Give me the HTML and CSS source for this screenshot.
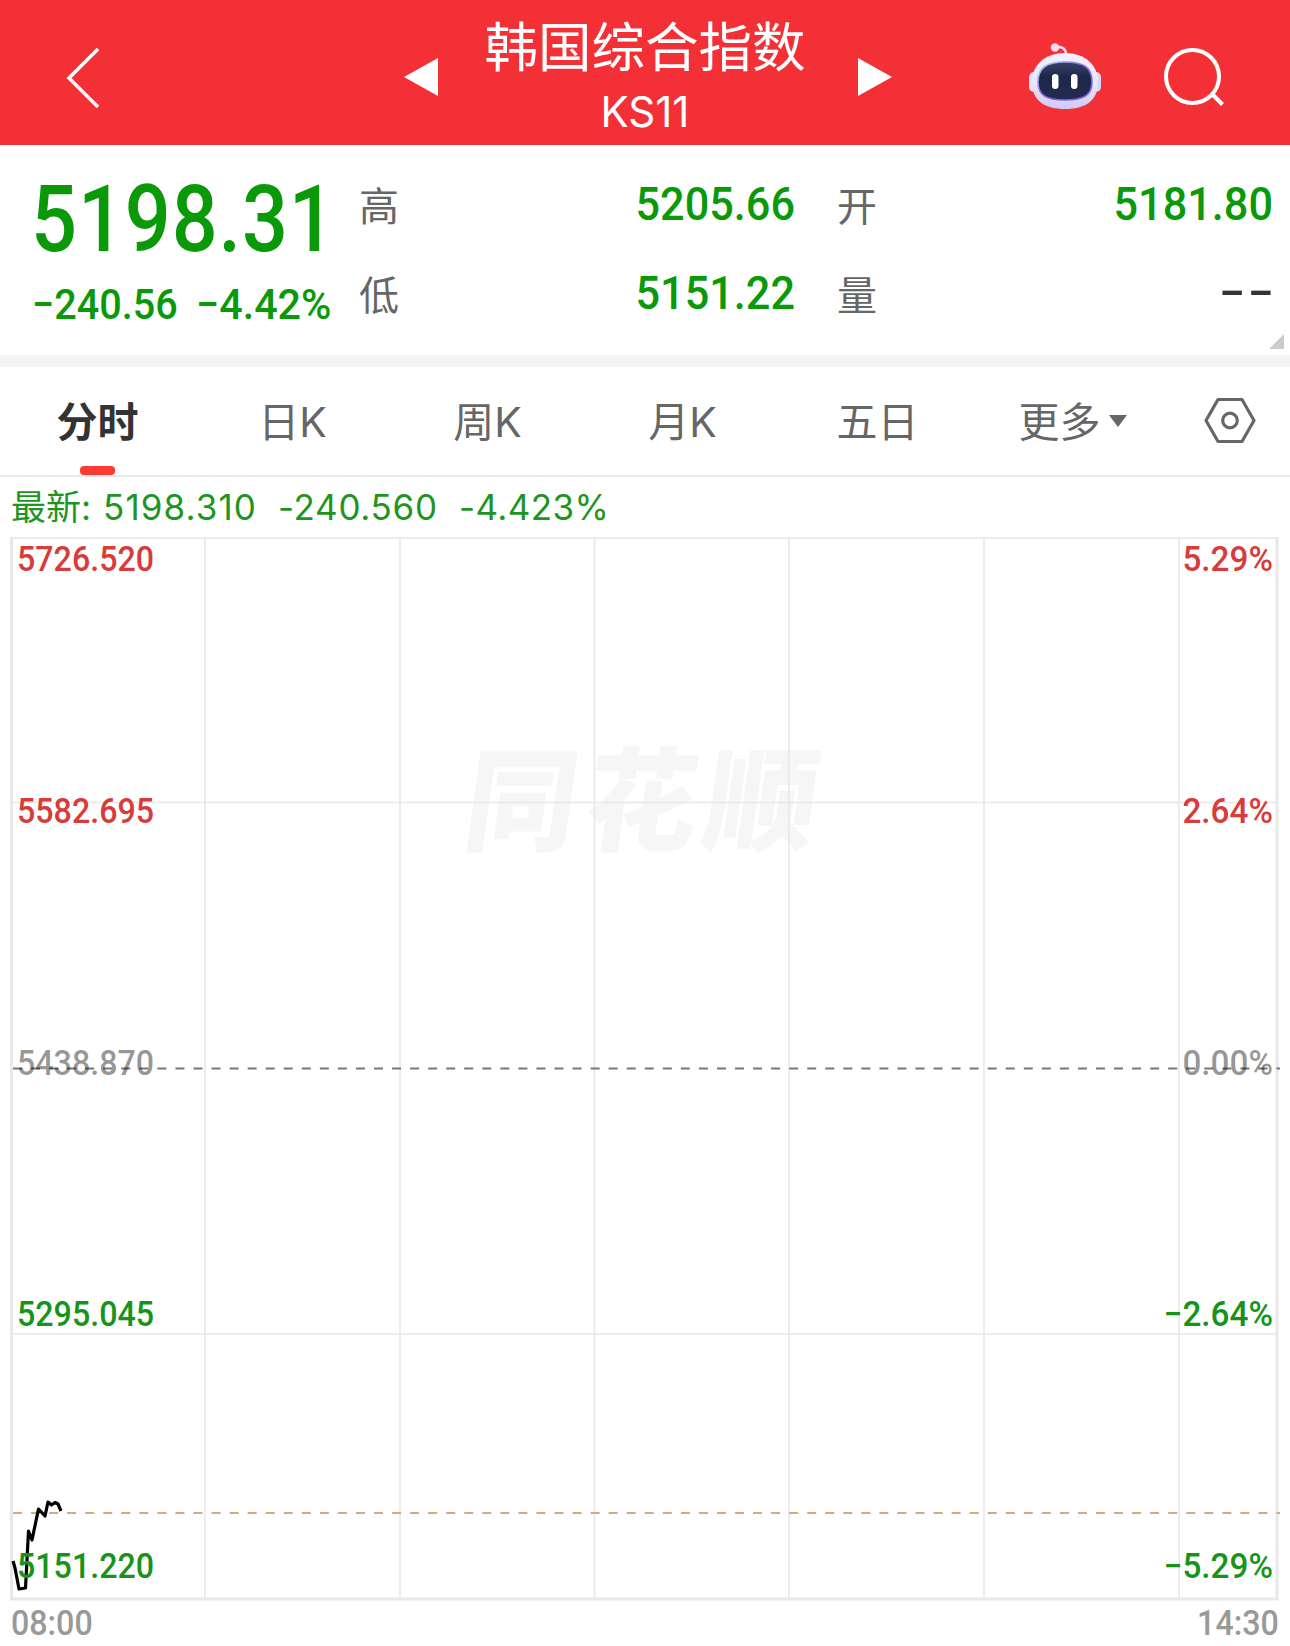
FILE: index.html
```html
<!DOCTYPE html>
<html lang="zh-CN">
<head>
    <meta charset="UTF-8">
    <meta name="viewport" content="width=device-width, initial-scale=1.0">
    <title>韩国综合指数 KS11</title>
    <link rel="stylesheet" href="styles.css">
</head>
<body>
    <header class="topbar">
        <svg class="back" width="40" height="64" viewBox="0 0 40 64" fill="none" stroke="#fff" stroke-width="3.5">
            <path d="M35 3 L6 32 L35 61"/>
        </svg>
        <div class="switcher">
            <svg width="34" height="38" viewBox="0 0 34 38" fill="#fff"><path d="M34 0 V38 L0 19 Z"/></svg>
            <div class="title">
                <h1>韩国综合指数</h1>
                <span>KS11</span>
            </div>
            <svg width="34" height="38" viewBox="0 0 34 38" fill="#fff"><path d="M0 0 V38 L34 19 Z"/></svg>
        </div>
        <div class="actions">
            <svg class="robot" width="74" height="70" viewBox="0 0 74 70">
                <defs>
                    <linearGradient id="shell" x1="0" y1="0" x2="0" y2="1">
                        <stop offset="0" stop-color="#f7effb"/>
                        <stop offset="0.55" stop-color="#e9e6fb"/>
                        <stop offset="1" stop-color="#cfc9f4"/>
                    </linearGradient>
                    <linearGradient id="rim" x1="0" y1="0" x2="1" y2="1">
                        <stop offset="0" stop-color="#a8d8f8"/>
                        <stop offset="0.5" stop-color="#8a5be0"/>
                        <stop offset="1" stop-color="#7a6be8"/>
                    </linearGradient>
                    <linearGradient id="face" x1="0" y1="0" x2="0" y2="1">
                        <stop offset="0" stop-color="#38416a"/>
                        <stop offset="0.4" stop-color="#1d2748"/>
                        <stop offset="1" stop-color="#222b50"/>
                    </linearGradient>
                </defs>
                <path d="M28 5 Q38 4 38 13" fill="none" stroke="#f3dcec" stroke-width="2.6"/>
                <circle cx="27" cy="5.5" r="4.2" fill="#f6dcea"/>
                <rect x="1" y="30" width="12" height="20" rx="5" fill="#e4e0fa"/>
                <rect x="61" y="30" width="12" height="20" rx="5" fill="#d9d6fa"/>
                <path d="M37 11 C57 11 70 23 70 40 C70 59 57 67 37 67 C17 67 4 59 4 40 C4 23 17 11 37 11 Z" fill="url(#shell)"/>
                <path d="M37 20 C56 20 64 26 64 40 C64 53 56 58 37 58 C18 58 10 53 10 40 C10 26 18 20 37 20 Z" fill="url(#face)" stroke="url(#rim)" stroke-width="1.6"/>
                <rect x="24" y="32" width="6.5" height="15" rx="3.2" fill="#fff"/>
                <rect x="43" y="32" width="6.5" height="15" rx="3.2" fill="#fff"/>
            </svg>
            <svg width="64" height="64" viewBox="0 0 64 64" fill="none" stroke="#fff" stroke-width="4">
                <circle cx="30.5" cy="31.5" r="26.5"/>
                <path d="M50 49 L60.5 59.5"/>
            </svg>
        </div>
    </header>

    <section class="quote">
        <div class="price">
            <div class="last num">5198.31</div>
            <div class="change"><span class="num">−240.56</span><span class="num">−4.42%</span></div>
        </div>
        <dl class="stats">
            <dt>高</dt><dd class="num">5205.66</dd>
            <dt>开</dt><dd class="num">5181.80</dd>
            <dt>低</dt><dd class="num">5151.22</dd>
            <dt>量</dt><dd class="num empty">--</dd>
        </dl>
        <i class="corner"></i>
    </section>

    <nav class="tabs">
        <a class="active"><span>分时</span></a>
        <a><span>日K</span></a>
        <a><span>周K</span></a>
        <a><span>月K</span></a>
        <a><span>五日</span></a>
        <a><span>更多</span><i class="caret"></i></a>
        <a>
            <svg width="52" height="48" viewBox="0 0 52 48" fill="none" stroke="#666" stroke-width="3.2">
                <path d="M14 2.5 H38 L50 23.5 L38 44.5 H14 L2 23.5 Z" stroke-linejoin="round"/>
                <circle cx="26" cy="23.5" r="7.3"/>
            </svg>
        </a>
    </nav>

    <div class="latest"><span>最新:</span><span>5198.310</span><span>-240.560</span><span>-4.423%</span></div>

    <section class="chart">
        <div class="watermark">同花顺</div>
        <svg class="plot" width="1270" height="1064" viewBox="0 0 1270 1064" fill="none">
            <g stroke="#e8e8e8" stroke-width="1.6">
                <path d="M195 0 V1062 M390 0 V1062 M584.5 0 V1062 M779 0 V1062 M974 0 V1062 M1169 0 V1062"/>
                <path d="M0 265.5 H1268 M0 797 H1268 M0 1 H1268"/>
                <path d="M1.5 0 V1063 M0 1062 H1269 M1267 0 V1063" stroke-width="3"/>
            </g>
            <path d="M3 531.5 H1270" stroke="#777" stroke-width="1.8" stroke-dasharray="9 9.05"/>
            <path d="M3 976 H1270" stroke="#cfae7c" stroke-width="1.8" stroke-dasharray="9 9.05"/>
            <path d="M3 1024 L5 1031 L9 1052 L15.5 1051 L18.5 994 L22 1003 L28.5 972 L35 979 L38 965 L41.5 968 L45 965.5 L48 967 L51 974" stroke="#000" stroke-width="3.2" stroke-linejoin="round"/>
        </svg>
        <div class="axis left">
            <span class="num up">5726.520</span>
            <span class="num up">5582.695</span>
            <span class="num flat">5438.870</span>
            <span class="num down">5295.045</span>
            <span class="num down">5151.220</span>
        </div>
        <div class="axis right">
            <span class="num up">5.29%</span>
            <span class="num up">2.64%</span>
            <span class="num flat">0.00%</span>
            <span class="num down">−2.64%</span>
            <span class="num down">−5.29%</span>
        </div>
    </section>
    <footer class="times"><span class="num">08:00</span><span class="num">14:30</span></footer>
</body>
</html>
```

FILE: styles.css
```css
* {
    box-sizing: border-box;
}

body {
    margin: 0;
    width: 1290px;
    height: 1646px;
    overflow: hidden;
    background-color: #fff;
    font-family: Inter, "Noto Sans CJK SC", sans-serif;
    color: #666;
}

h1, dl, dd {
    margin: 0;
    font-weight: normal;
}

svg {
    display: block;
    flex: none;
}

.num {
    font-family: Roboto, sans-serif;
    font-weight: 500;
    display: block;
    white-space: nowrap;
    transform: scaleX(0.92);
    transform-origin: left;
}

/* top bar */
.topbar {
    height: 145px;
    background-color: #f33036;
    color: #fff;
    display: grid;
    grid-template-columns: 404px 488px 1fr;
}

.back {
    margin: 46px 0 0 63px;
}

.switcher {
    display: flex;
    justify-content: space-between;
}

.switcher > svg {
    margin-top: 58px;
}

.title {
    text-align: center;
    padding: 18px 6px 0 0;
}

.title h1 {
    font-size: 53.5px;
    line-height: 60px;
}

.title span {
    display: block;
    font-size: 42px;
    line-height: 50px;
    margin-top: 9px;
}

.actions {
    display: flex;
    padding: 42px 0 0 136px;
    gap: 60px;
}

.actions svg + svg {
    margin-top: 3px;
}

/* quote */
.quote {
    position: relative;
    height: 222px;
    border-bottom: 12px solid #f4f4f4;
    display: flex;
    color: #099909;
}

.price {
    width: 359px;
    padding: 28px 0 0 31px;
}

.last {
    font-size: 92px;
    line-height: 94px;
    letter-spacing: 1px;
    transform: scaleX(0.88);
}

.change {
    display: flex;
    font-size: 43px;
    line-height: 50px;
    margin: 12px 0 0 1px;
}

.change .num {
    width: 171px;
}

.change .num:last-child {
    transform: scaleX(0.96);
}

.stats {
    display: grid;
    grid-template-columns: 40px 396px 82px 396px;
    grid-auto-rows: 89px;
    padding-top: 16px;
}

.stats dt {
    color: #666;
    font-size: 40px;
    line-height: 92px;
}

.stats dt:nth-of-type(even) {
    padding-left: 42px;
}

.stats dd {
    font-size: 47px;
    line-height: 86px;
    text-align: right;
    transform-origin: right;
}

.stats .empty {
    color: #333;
    letter-spacing: 2px;
    line-height: 81px;
    margin-right: -4px;
    transform: scaleX(1.6);
}

.corner {
    position: absolute;
    right: 6px;
    bottom: 6px;
    width: 15px;
    height: 15px;
    background-color: #ccc;
    clip-path: polygon(100% 0, 100% 100%, 0 100%);
}

/* tabs */
.tabs {
    display: grid;
    grid-template-columns: repeat(6, 195px) 120px;
    height: 110px;
    border-bottom: 2px solid #e9e9e9;
    font-size: 41px;
}

.tabs a {
    position: relative;
    display: flex;
    align-items: center;
    justify-content: center;
}

.tabs span {
    padding-bottom: 4px;
}

.tabs .active {
    color: #333;
    font-weight: bold;
}

.tabs .active::after {
    content: "";
    position: absolute;
    bottom: 0;
    left: 80px;
    width: 35px;
    height: 9px;
    border-radius: 4px;
    background-color: #fb3a34;
}

.caret {
    border: 9px solid transparent;
    border-top: 12px solid #666;
    border-bottom: 0;
    margin-left: 8px;
}

.latest {
    height: 60px;
    padding-left: 11px;
    display: flex;
    font-size: 35px;
    line-height: 61px;
    color: #1e951e;
}

.latest span {
    width: 175px;
    letter-spacing: 1.1px;
}

.latest span:first-child {
    width: 92px;
    letter-spacing: 0;
}

.latest span:nth-child(3) {
    width: 181px;
    letter-spacing: 0.7px;
}

.latest span:last-child {
    letter-spacing: 0.4px;
}

/* chart */
.chart {
    position: relative;
    height: 1064px;
    margin-left: 10px;
    width: 1270px;
}

.plot {
    position: relative;
}

.watermark {
    position: absolute;
    left: 456px;
    top: 189px;
    font-size: 112px;
    line-height: 150px;
    letter-spacing: 8px;
    font-weight: 900;
    color: #f6f6f6;
    transform: skewX(-8deg);
}

.axis {
    position: absolute;
    top: 1px;
    height: 1051px;
    display: flex;
    flex-direction: column;
    justify-content: space-between;
    font-size: 35px;
    line-height: 44px;
}

.axis.left {
    left: 7px;
}

.axis.right {
    right: 7px;
    text-align: right;
}

.axis.right .num {
    transform: scaleX(0.95);
    transform-origin: right;
}

.up {
    color: #d93a3a;
}

.down {
    color: #179417;
}

.flat {
    color: rgba(0, 0, 0, 0.42);
}

.times {
    display: flex;
    justify-content: space-between;
    padding: 2px 11px 0;
    font-size: 35px;
    line-height: 42px;
    color: #999;
}

.times .num:last-child {
    transform-origin: right;
}
```
